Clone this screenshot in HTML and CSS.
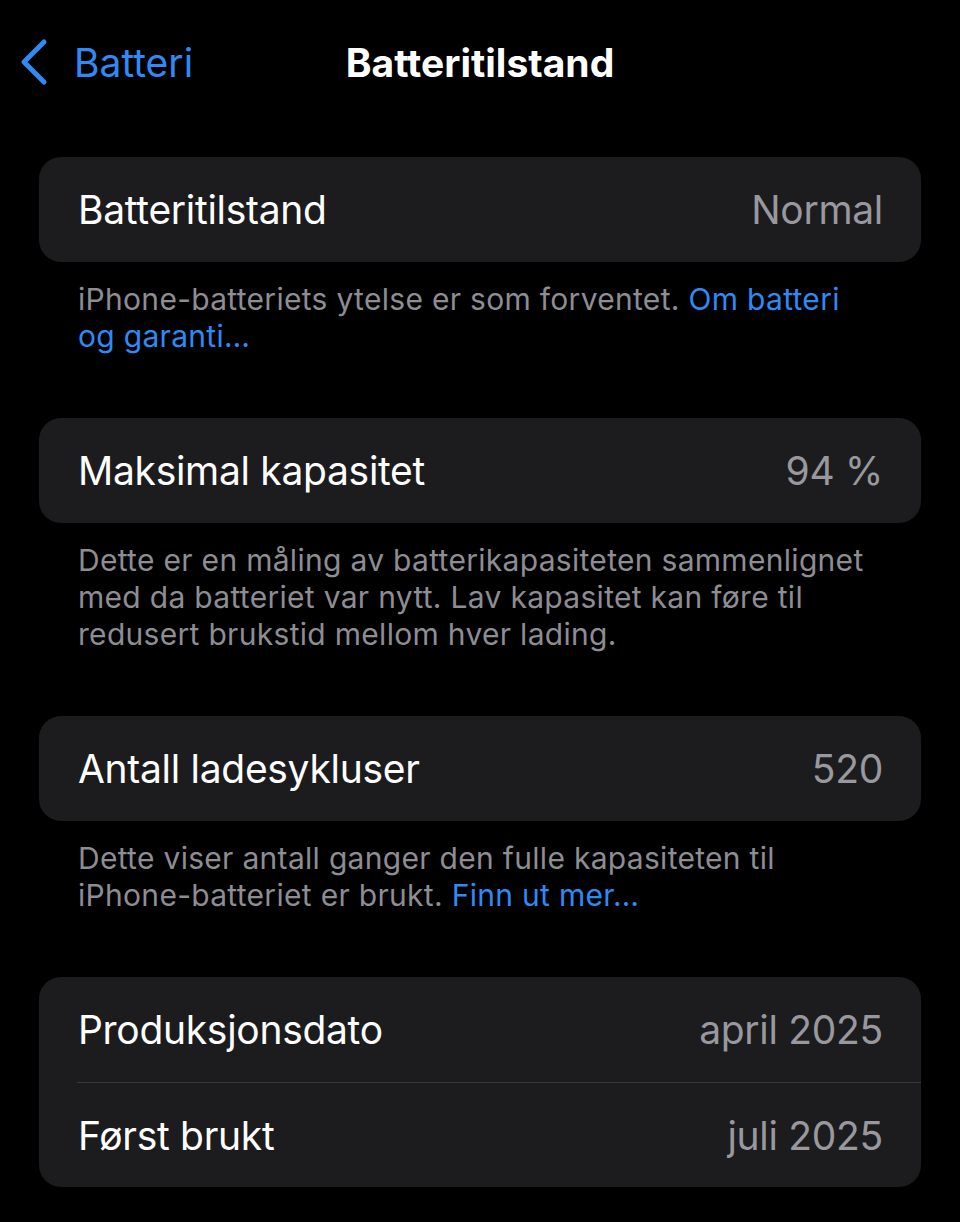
FILE: index.html
```html
<!DOCTYPE html>
<html lang="nb">
<head>
    <meta charset="UTF-8">
    <meta name="viewport" content="width=device-width, initial-scale=1.0">
    <title>Batteritilstand</title>
    <link rel="stylesheet" href="styles.css">
</head>
<body>
    <header class="navbar">
        <a class="back" href="#">
            <svg class="chevron" width="30" height="48" viewBox="0 0 30 48">
                <path d="M24 4 L4 24 L24 44" fill="none" stroke="#2f8af5" stroke-width="5" stroke-linecap="round" stroke-linejoin="round"/>
            </svg>
            <span>Batteri</span>
        </a>
        <h1>Batteritilstand</h1>
    </header>

    <main class="content">
        <!-- Tilstand -->
        <section class="group">
            <div class="card">
                <div class="row">
                    <span class="label">Batteritilstand</span>
                    <span class="value">Normal</span>
                </div>
            </div>
            <p class="note">iPhone-batteriets ytelse er som forventet. <a href="#">Om batteri og garanti…</a></p>
        </section>

        <!-- Kapasitet -->
        <section class="group">
            <div class="card">
                <div class="row">
                    <span class="label">Maksimal kapasitet</span>
                    <span class="value">94 %</span>
                </div>
            </div>
            <p class="note">Dette er en måling av batterikapasiteten sammenlignet med da batteriet var nytt. Lav kapasitet kan føre til redusert brukstid mellom hver lading.</p>
        </section>

        <!-- Ladesykluser -->
        <section class="group">
            <div class="card">
                <div class="row">
                    <span class="label">Antall ladesykluser</span>
                    <span class="value">520</span>
                </div>
            </div>
            <p class="note">Dette viser antall ganger den fulle kapasiteten til iPhone-batteriet er brukt. <a href="#">Finn ut mer…</a></p>
        </section>

        <!-- Datoer -->
        <section class="group">
            <div class="card">
                <div class="row">
                    <span class="label">Produksjonsdato</span>
                    <span class="value">april 2025</span>
                </div>
                <div class="row">
                    <span class="label">Først brukt</span>
                    <span class="value">juli 2025</span>
                </div>
            </div>
        </section>
    </main>
</body>
</html>
```

FILE: styles.css
```css
body {
    font-family: Inter, "Noto Sans", sans-serif;
    margin: 0;
    padding: 0;
    background: #000;
    color: #fff;
    -webkit-font-smoothing: antialiased;
}
.navbar {
    position: relative;
    height: 124px;
    display: flex;
    align-items: center;
    justify-content: center;
}
.navbar h1 {
    margin: 0;
    font-size: 39px;
    font-weight: 700;
}
.back {
    position: absolute;
    left: 20px;
    top: 38px;
    display: flex;
    align-items: center;
    gap: 24px;
    color: #2f8af5;
    text-decoration: none;
    font-size: 39px;
}
.chevron {
    display: block;
}
.content {
    padding: 33px 39px 0;
}
.group {
    margin-bottom: 63px;
}
.card {
    background: #1c1c1e;
    border-radius: 22px;
    overflow: hidden;
}
.row {
    height: 104px;
    display: flex;
    align-items: center;
    justify-content: space-between;
    padding: 0 38px 0 39px;
    font-size: 39px;
    letter-spacing: -0.3px;
}
.row:first-child {
    height: 105px;
}
.row + .row {
    border-top: 1px solid #38383a;
    margin-left: 38px;
    padding-left: 1px;
}
.label {
    color: #fff;
}
.value {
    color: #98989e;
}
.note {
    margin: 0;
    padding: 19px 43px 0 39px;
    font-size: 30px;
    letter-spacing: 0.3px;
    line-height: 37px;
    color: #8d8d93;
}
.note a {
    color: #2f8af5;
    text-decoration: none;
}
```
